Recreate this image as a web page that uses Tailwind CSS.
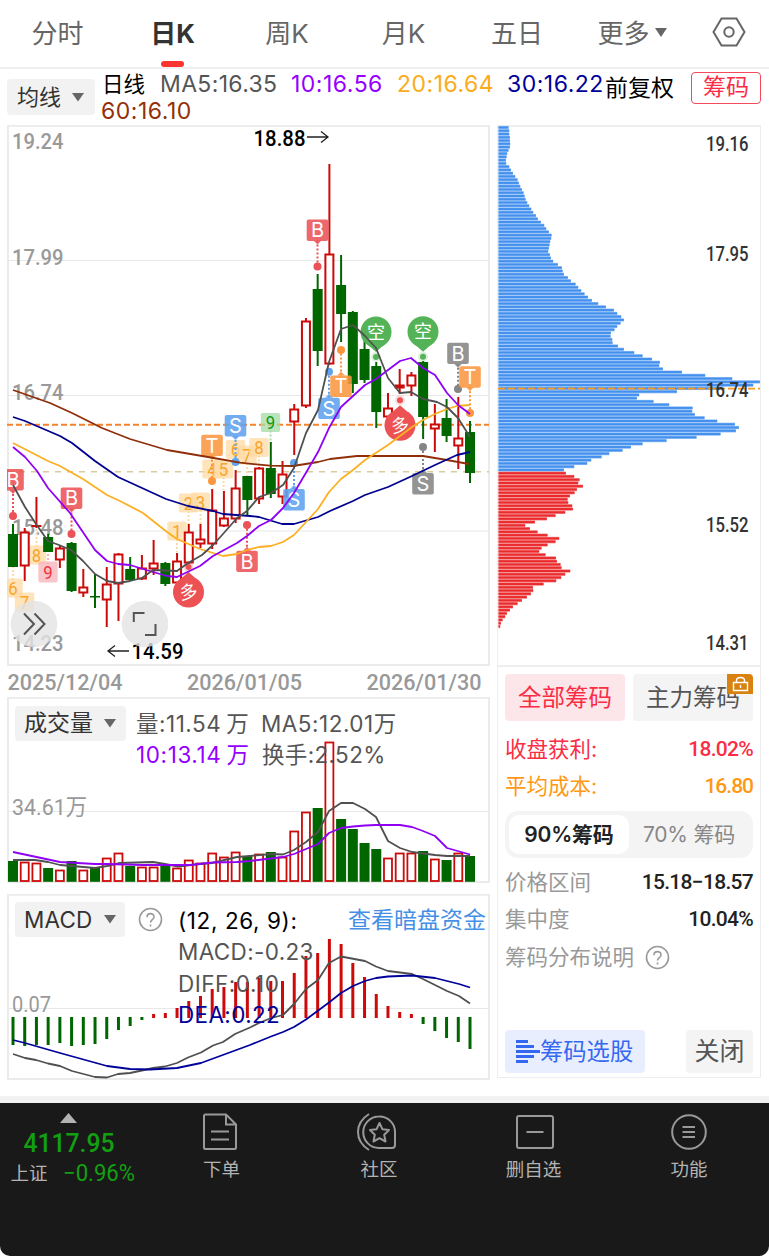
<!DOCTYPE html>
<html lang="zh-CN">
<head>
<meta charset="utf-8">
<title>日K</title>
<script src="https://cdn.jsdelivr.net/npm/@tailwindcss/browser@4"></script>
</head>
<body class="w-[769px] h-[1256px] overflow-hidden bg-white font-['Inter','Noto_Sans_CJK_SC',sans-serif] text-[#666] whitespace-nowrap">
<div class="flex flex-col h-[1256px]">
  <nav class="flex h-[69px] border-b-2 border-[#f0f0f0] text-[26px] leading-[67px] text-center shrink-0">
    <div class="w-[115px]">分时</div>
    <div class="w-[115px] flex flex-col items-center font-bold text-[#333]"><span class="h-[61px]">日K</span><span class="w-[23px] h-[6px] rounded-full bg-[#fb3430]"></span></div>
    <div class="w-[114px]">周K</div>
    <div class="w-[119px]">月K</div>
    <div class="w-[108px]">五日</div>
    <div class="w-[123px] flex items-center justify-center gap-[4px] h-[67px]">更多<svg width="14" height="9" class="-mt-[3px]"><path d="M1 0H13L7 9Z" fill="#666"/></svg></div>
    <div class="w-[69px] flex items-center justify-center h-[64px]"><svg width="34" height="30" viewBox="0 0 34 30" fill="none" stroke="#666" stroke-width="2"><path d="M9.500 1.500H24.500L32.500 15L24.500 28.500H9.500L1.500 15Z"/><circle cx="17" cy="15" r="4.700"/></svg></div>
  </nav>

  <div class="flex h-[56px] pl-[7px] shrink-0">
    <div class="mt-[10px] w-[88px] h-[36px] rounded bg-[#f2f2f2] text-[#333] text-[22px] leading-[35px] pl-[10px] flex items-center gap-[11px]">均线<svg width="13" height="9"><path d="M0 0H12L6 8.500Z" fill="#666"/></svg></div>
    <div class="w-[510px] pl-[6px] flex flex-wrap content-start text-[23px] leading-[27px] pt-[2px] tracking-[0.5px]">
      <div class="w-[59px] pl-px text-black text-[21.500px] tracking-normal">日线</div>
      <div class="w-[131px] text-[#555] tracking-[0.35px]">MA5:16.35</div>
      <div class="w-[106px] text-[#9500ff]">10:16.56</div>
      <div class="w-[110px] text-[#faac1a]">20:16.64</div>
      <div class="w-[97px] text-[#00009b]">30:16.22</div>
      <div class="w-[110px] text-[#933008]">60:16.10</div>
    </div>
    <div class="w-[86px] text-black text-[23px] leading-[38px]">前复权</div>
    <div class="mt-[3px] w-[70px] h-[32px] rounded-[4px] border border-[#f5495c] text-[#fa2d45] text-[23px] leading-[29px] text-center">筹码</div>
  </div>

  <main class="flex h-[971px] shrink-0 pl-[7px] gap-[7px]">
    <div class="w-[483px] flex flex-col">
      <section class="h-[541px] w-[483px] shrink-0">
        <svg id="k" width="483" height="541" viewBox="7 125 483 541"></svg>
      </section>
      <div class="h-[31px] shrink-0"><svg id="dates" width="483" height="31" viewBox="7 666 483 31"></svg></div>
      <section class="relative h-[186px] shrink-0 mb-[11px]">
        <svg id="vol" class="absolute inset-0" width="483" height="186" viewBox="7 697 483 186"></svg>
        <div class="relative flex pl-[8px] pt-[9px]">
          <div class="w-[111px] h-[35px] rounded bg-[#f2f2f2] text-[#333] text-[23px] pl-[9px] flex items-center gap-[11px]">成交量<svg width="13" height="9"><path d="M0 0H12L6 8.500Z" fill="#666"/></svg></div>
          <div class="pl-[10px] grid grid-cols-[125px_140px] text-[22.500px] leading-[31px] text-[#555] pt-[2px] tracking-[0.5px]">
            <span>量:11.54<span class="ml-[5px]">万</span></span><span>MA5:12.01万</span>
            <span class="text-[#9500ff] tracking-[0.6px]">10:13.14<span class="ml-[5px]">万</span></span><span class="pl-px tracking-[0.35px]">换手:2.52%</span>
          </div>
        </div>
      </section>
      <section class="relative h-[186px] shrink-0">
        <svg id="macd" class="absolute inset-0" width="483" height="186" viewBox="7 894 483 186"></svg>
        <div class="relative flex pl-[8px] pt-[8px]">
          <div class="w-[110px] h-[35px] rounded bg-[#f2f2f2] text-[#333] text-[22.500px] pl-[9px] flex items-center gap-[11px] tracking-[0.2px]">MACD<svg width="13" height="9"><path d="M0 0H12L6 8.500Z" fill="#666"/></svg></div>
          <svg class="ml-[13px] mt-[5px]" width="25" height="25"><circle cx="12.500" cy="12.500" r="11" fill="none" stroke="#999" stroke-width="1.600"/><path d="M9 10.200C9 5.500 16 5.500 16 10C16 12.500 12.500 12.600 12.500 15.500M12.500 17.500V19.500" fill="none" stroke="#999" stroke-width="1.600"/></svg>
          <div class="pl-[15px] text-[22.500px] leading-[31.300px] text-[#555] pt-[3px] tracking-[0.35px]">
            <div class="flex w-[308px] justify-between text-black"><span class="tracking-[0.6px]">(12, 26, 9):</span><span class="text-[#4590e6] text-[23px] tracking-normal">查看暗盘资金</span></div>
            <div>MACD:-0.23</div>
            <div class="tracking-[0.5px]">DIFF:0.10</div>
            <div class="text-[#00009b]">DEA:0.22</div>
          </div>
        </div>
      </section>
    </div>

    <aside class="w-[264px] h-[953px] border border-t-2 border-[#eee] flex flex-col">
      <svg id="chips" class="shrink-0 -mt-[2px] -ml-px" width="264" height="541" viewBox="497 125 264 541"></svg>
      <div class="flex flex-col flex-1 pl-[7px] pr-[7px] border-t-2 border-[#eee] pt-[7px] -mt-px">
        <div class="flex gap-[8px] text-[23.500px] leading-[48px] text-center">
          <div class="w-[120px] h-[47px] rounded bg-[#fde6e9] text-[#fa2d45]">全部筹码</div>
          <div class="relative w-[120px] h-[47px] rounded bg-[#f4f4f4] text-[#555]">主力筹码
            <svg class="absolute top-0 right-0" width="26" height="20"><path d="M0 0H22Q26 0 26 4V20H0Z" fill="#d9820f"/><path d="M6.500 8.500H20.500V16.500H6.500ZM9.500 8V6.500Q9.500 3.500 13.500 3.500T17.500 6.500V8M13.500 11V14" fill="none" stroke="#fff" stroke-width="1.400"/></svg>
          </div>
        </div>
        <div class="flex justify-between text-[#fa2d45] mt-[9px] h-[37px] leading-[39px] text-[21.500px]"><span>收盘获利:</span><span class="font-['Roboto'] font-medium text-[21px] leading-[38px] tracking-[-0.700px]">18.02%</span></div>
        <div class="flex justify-between text-[#ff9814] h-[37px] leading-[39px] text-[21.500px]"><span>平均成本:</span><span class="font-['Roboto'] font-medium text-[21px] leading-[38px] tracking-[-1px]">16.80</span></div>
        <div class="mt-[7px] h-[47px] rounded-[13px] bg-[#f4f4f4] p-[4px] flex text-[21px] leading-[40px] text-center shrink-0">
          <div class="w-[120px] rounded-[10px] bg-white text-[#222] font-semibold tracking-[-0.200px]">90%筹码</div>
          <div class="w-[120px] text-[#888] tracking-[-0.200px]">70% 筹码</div>
        </div>
        <div class="flex justify-between mt-[5px] h-[37px] leading-[39px] text-[21.500px] text-[#999]"><span>价格区间</span><span class="font-['Roboto'] font-medium text-[21px] text-[#222] tracking-[-0.700px]">15.18−18.57</span></div>
        <div class="flex justify-between h-[38px] leading-[39px] text-[21.500px] text-[#999]"><span>集中度</span><span class="font-['Roboto'] font-medium text-[21px] text-[#222] tracking-[-0.700px]">10.04%</span></div>
        <div class="flex items-center gap-[11px] h-[39px] text-[21.500px] text-[#999]">筹码分布说明<svg width="25" height="25"><circle cx="12.500" cy="12.500" r="11" fill="none" stroke="#999" stroke-width="1.600"/><path d="M9 10.200C9 5.500 16 5.500 16 10C16 12.500 12.500 12.600 12.500 15.500M12.500 17.500V19.500" fill="none" stroke="#999" stroke-width="1.600"/></svg></div>
        <div class="flex justify-between mt-auto mb-[4px] text-[23.300px] leading-[43px]">
          <div class="w-[140px] h-[43px] rounded bg-[#e9eeff] text-[#3568f0] flex items-center pl-[11px]"><svg width="24" height="23" stroke="#3568f0" stroke-width="2.800"><path d="M0 1.500H12M0 6.500H18M0 11.500H24M0 16.500H18M0 21.500H12"/></svg>筹码选股</div>
          <div class="w-[67px] h-[43px] rounded bg-[#f4f4f4] text-[#555] text-center text-[25px]">关闭</div>
        </div>
      </div>
    </aside>
  </main>

  <div class="flex-1 bg-[#f2f2f2] flex flex-col">
    <div class="h-[7px]"></div>
    <div class="flex-1 bg-white"><footer class="h-full bg-[#191919] rounded-b-[10px] flex text-[#b3b3b3] text-[18.500px] leading-[26px]">
      <div class="w-[145px] pt-[10px]">
        <svg class="ml-[60px]" width="17" height="10"><path d="M8.500 0L17 10H0Z" fill="#b3b3b3"/></svg>
        <svg id="idx" width="145" height="64" viewBox="0 1123 145 64"></svg>
      </div>
      <div class="w-[153px] flex flex-col items-center pt-[10px] text-center">
        <svg class="-ml-[4px]" width="36" height="38" fill="none" stroke="#999" stroke-width="2"><path d="M2 3Q2 1.500 3.500 1.500H24L34 11.500V34.500Q34 36 32.500 36H3.500Q2 36 2 34.500ZM24 1.500V11.500H34M9 18.500H27M9 26.500H27"/></svg>
        <span class="mt-[5px]">下单</span>
      </div>
      <div class="w-[163px] flex flex-col items-center pt-[10px]">
        <svg class="-ml-[5px]" width="40" height="38" fill="none" stroke="#999" stroke-width="2"><path d="M12 1Q1 8 1 19T12 37M22 3.500A15.500 15.500 0 1 0 22 35H35Q38 35 38 32V19A15.500 15.500 0 0 0 22 3.500Z"/><path d="M22.500 10L25.400 16.200L32 17L27.200 21.800L28.500 28.500L22.500 25.200L16.500 28.500L17.800 21.800L13 17L19.600 16.200Z" stroke-linejoin="round"/></svg>
        <span class="mt-[5px] -ml-px">社区</span>
      </div>
      <div class="w-[145px] flex flex-col items-center pt-[10px]">
        <svg class="ml-[3px]" width="40" height="38" fill="none" stroke="#999" stroke-width="2"><rect x="2" y="3" width="36" height="32" rx="2"/><path d="M11.500 19H28.500"/></svg>
        <span class="mt-[5px]">删自选</span>
      </div>
      <div class="w-[163px] flex flex-col items-center pt-[10px]">
        <svg class="ml-[2px]" width="40" height="38" fill="none" stroke="#999" stroke-width="2"><circle cx="20" cy="19" r="16.800"/><path d="M13.500 14H26M13.500 19H26M13.500 24H26"/></svg>
        <span class="mt-[5px] ml-[3px]">功能</span>
      </div>
    </footer></div>
  </div>
</div>
<script>
const NS='http://www.w3.org/2000/svg', $=id=>document.getElementById(id);
function el(p,n,a,t){const e=document.createElementNS(NS,n);for(const k in a)e.setAttribute(k,a[k]);if(t!==undefined)e.textContent=t;p.appendChild(e);return e}
const R='#cc0a0a',G='#006600',X=i=>13+i*11.718;
const line=(s,x1,y1,x2,y2,c,w,d)=>el(s,'line',{x1,y1,x2,y2,stroke:c,'stroke-width':w,...(d?{'stroke-dasharray':d}:{})});
const poly=(s,pts,c)=>el(s,'polyline',{points:pts,fill:'none',stroke:c,'stroke-width':1.8,'stroke-linejoin':'round'});
const num=(s,x,y,w,size,c,t,wt=500)=>el(s,'text',{x,y,fill:c,'font-family':'Roboto, "Noto Sans CJK SC", sans-serif','font-weight':wt,'font-size':size,textLength:w,lengthAdjust:'spacingAndGlyphs'},t);
const frame=(s,x,y,w,h)=>el(s,'rect',{x:x+1,y:y+.8,width:w-2,height:h-1.800,fill:'none',stroke:'#ebebeb','stroke-width':2});

// Price chart: [up, high, bodyTop, bodyBottom, low]
const K=[[0,524,534,567,567],[1,528,532,566,581],[1,497,526,527,528],[0,534,537,552,552],[1,546,548,560,568],[0,542,543,591,592],[1,569,587,593,597],[0,574,596,597.5,608],[1,567,584,600,627],[1,553,554,584,621],[0,557,569,580,581],[1,555,568,579,580],[1,540,563,569,575],[0,562,563,584,586],[1,553,561,583,585],[1,524,532,563,564],[1,524,539,544,548],[1,489,510,544,549],[1,491,518,526,527],[1,470,488,519,523],[0,476,476,500,516],[1,467,468,499,504],[0,442,468,494,498],[1,461,474,497,504],[1,404,409,422,455],[1,318,321,406,408],[0,274,289,351,366],[1,164,254,364,365],[0,255,285,314,342],[0,311,312,384,393],[0,332,349,380,383],[0,362,366,412,428],[1,393,408,417,428],[1,369,385,388,394],[1,372,375,386,396],[0,361,362,417,439],[1,404,424,429,452],[0,399,418,436,442],[1,397,438,446,469],[0,421,432,473,483]];
const k=$('k');
frame(k,7,125,483,541);
[260.5,395.5,531].forEach(y=>line(k,8,y,489,y,'#e8e8e8',1.2));
[[148.5,'19.24'],[264.5,'17.99'],[399.5,'16.74'],[534.5,'15.48'],[650.5,'14.23']].forEach(a=>num(k,12,a[0],51.5,22.5,'#999',a[1]));
line(k,7,424.7,489,424.7,'#f5822d',1.9,'6 3');
line(k,7,471.7,489,471.7,'#d8cc9f',1.4,'6 6');
function num9(x,y,t,f='#ffd9a3',c='#f7a52b',h=19,tail=0){
  if(tail)line(k,x,y,x,tail,f,2,'2 2');
  el(k,'rect',{x:x-9.7,y:y-h/2,width:19.4,height:h,rx:2,fill:f,'fill-opacity':.75});
  num(k,x-4.7,y+6.5,9.4,18,c,t,400)}
num9(36.5,555,'8',undefined,undefined,19,529);num9(48,572,'9','#f6b3b8','#f0323c',21,553);
num9(13,588,'6',undefined,undefined,19,567);num9(24.5,602,'7');
num9(177,531,'1',undefined,undefined,19,552);num9(188.5,503,'2',undefined,undefined,19,524);num9(200.5,502,'3',undefined,undefined,19,524);
num9(212,469,'4');num9(223.5,469,'5',undefined,undefined,19,490);num9(235.5,449.5,'6');num9(247,455,'7',undefined,undefined,19,476);num9(259,447.5,'8',undefined,undefined,19,467);
num9(270.5,422.5,'9','#a6dba6','#0f9a12',19,443);
K.forEach((d,i)=>{const x=X(i),c=d[0]?R:G;
  if(d[0]){line(k,x,d[1],x,d[2],c,2);line(k,x,d[3],x,d[4],c,2);
    d[3]-d[2]<2?line(k,x-5,d[2],x+5,d[2],c,2):el(k,'rect',{x:x-4,y:d[2]+.5,width:8,height:d[3]-d[2]-1,fill:'#fff',stroke:c,'stroke-width':2})}
  else{line(k,x,d[1],x,d[4],c,2);el(k,'rect',{x:x-5,y:d[2],width:10,height:d[3]-d[2],fill:c})}});
function tag(x,top,t,c,dot){const below=dot>top;
  line(k,x,below?top+21:top,x,dot,c,2,'2 2');
  el(k,'circle',{cx:x,cy:dot,r:4,fill:c});
  el(k,'path',{d:below?`M${x-4} ${top+21}h8l-4 4z`:`M${x-4} ${top}h8l-4 -4z`,fill:c,'fill-opacity':.85});
  el(k,'rect',{x:x-10.8,y:top,width:21.6,height:21.4,rx:2,fill:c,'fill-opacity':.88});
  el(k,'text',{x,y:top+17.8,fill:'#fff','text-anchor':'middle','font-family':'Inter','font-size':20},t)}
const tr='#ea5257',tb='#5ea2f0',to='#fb963f',tg='#858585';
tag(13,469,'B',tr,516);tag(71.5,487.5,'B',tr,534);tag(247,550.7,'B',tr,525);tag(317.5,219.5,'B',tr,266.5);
tag(235.5,415,'S',tb,462);tag(212,434.7,'T',to,481);tag(329,397.7,'S',tb,371.7);tag(341,375.5,'T',to,350);
tag(294,489,'S',tb,463);tag(423,473,'S',tg,447);tag(458,342.7,'B',tg,389);tag(470,366.3,'T',to,413);
function pin(x,y,t,c,dir,rot){
  el(k,'circle',{cx:x,cy:y+dir*25,r:5,fill:c,'fill-opacity':.2});
  el(k,'circle',{cx:x,cy:y+dir*25,r:3,fill:c});
  el(k,'path',{d:`M${x-9} ${y+dir*12}L${x} ${y+dir*20}L${x+9} ${y+dir*12}Z`,fill:c});
  el(k,'circle',{cx:x,cy:y,r:15.5,fill:c});
  el(k,'text',{x,y:y+6.5,fill:'#fff','text-anchor':'middle','font-family':'"Noto Sans CJK SC"','font-size':18,transform:`rotate(${rot} ${x} ${y})`},t)}
pin(376,332,'空','#55b357',1,0);pin(423,331.7,'空','#55b357',1,0);
pin(400,425.3,'多','#ec5153',-1,-8);pin(188.5,592,'多','#ec5153',-1,-8);
poly(k,'13,390 50,403 72,413 102,428 130,439 167,450 208,457 240,462.7 270,465.7 293,466 318,462 330,459 357,456 400,456 423,456 447,460 469,464','#8f2e08');
poly(k,'13,417 25,421 60,436 72,443 95,461 118,477 142,488 166,499 188,506 213,511 223,514 250,516 259,517 282,524 294,524 318,517 330,511 353,501 365,495 388,487 412,476 435,465 457,455 470,452','#00008f');
poly(k,'13,443 48,461 60,466 83,479 107,495 120,501 143,513 167,532 177,539 200,549 223,556 237,554 247,550 259,547 271,546 283,542 294,535 318,509 329,492 341,479 353,470 365,460 388,445 412,427 423,420 435,414 447,409 457,406 470,405','#fbb022');
poly(k,'13,447 25,457 37,471 48,488 70,513 95,550 107,561 118,564 130,565 153,572 167,576 177,577 200,566 213,556 237,543 247,536 259,526 271,520 283,508 294,493 307,471 318,452 329,428 341,407 365,385 376,379 388,370 400,361 411,358 423,368 435,375 447,393 458,405 470,414','#9000f5');
poly(k,'13,485 25,507 36,524 48,541 59,545 71,550 83,561 95,574 107,581 118,583 130,581 142,578 153,570 177,571 188,563 202,555 213,545 223,534 237,518 247,511 259,497 271,493 283,485 294,468 306,433 318,410 329,362 341,329 353,325 365,336 376,348 388,378 400,393 411,392 423,399 437,402 447,407 458,418 470,437','#505050');
num(k,253.5,145.5,52,22,'#000','18.88');
el(k,'path',{d:'M307 137H328M321 131.5L328 137L321 142.5M129 651H108M115 645.5L108 651L115 656.5',fill:'none',stroke:'#222','stroke-width':1.3});
num(k,131.5,659,52,22,'#000','14.59');
[[34,624],[145,624]].forEach(c=>el(k,'circle',{cx:c[0],cy:c[1],r:23.3,fill:'#e3e3e3','fill-opacity':.8}));
el(k,'path',{d:'M24 613.5L34 624L24 634.5M34.5 613.5L44.5 624L34.5 634.5M133.8 622V613H144.5M155.5 624V635H145',fill:'none',stroke:'#555','stroke-width':2});
[[7.5,'2025/12/04'],[187,'2026/01/05'],[366.5,'2026/01/30']].forEach(a=>num($('dates'),a[0],689.5,115,22,'#999',a[1]));

// Volume
const v=$('vol');frame(v,7,697,483,186);line(v,8,811.5,489,811.5,'#e8e8e8',1.2);
num(v,12,815,75,22.5,'#999','34.61万',400);
[861,862,863,868,870,861,870,868,858,853,866,867,867,866,868,860,863,853,857,852,856,854,852,857,831,812,808,742,819,829,843,849,858,853,853,851,859,860,853,856].forEach((y,i)=>K[i][0]?el(v,'rect',{x:X(i)-4,y:y+.5,width:8,height:880.5-y,fill:'#fff',stroke:R,'stroke-width':1.8}):el(v,'rect',{x:X(i)-5,y,width:10,height:881.8-y,fill:G}));
poly(v,'13,860 35,860 48,862 60,865 72,866 95,868 107,866 120,863 153,862 165,864 178,866.5 200,864 212,863 237,857 250,856 271,854 283,854.5 294,850 306,842 318,832 329,811 341,803 353,803 365,809 376,817 388,841 400,848 412,852 435,855 447,856 470,856','#505050');
poly(v,'13,852 60,862 95,864 107,864 142,865 190,865 213,862.5 237,862 250,861 283,857 294,854 318,844 329,833 341,828 353,826.5 365,825.5 376,825 400,825 412,827 423,831 435,836 447,848 470,854.5','#9000f5');

// MACD
const m=$('macd');frame(m,7,894,483,186);line(m,8,1008.5,489,1008.5,'#e8e8e8',1.2);
num(m,12,1011.5,39,22.5,'#999','0.07',400);
[1045,1046,1045,1045,1043,1046,1045,1044,1039,1030,1026,1020,1014,1013,1008,1001,996,989,987,982,982,978,981,981,973,956,953,939,944,963,977,994,1006,1012,1014,1024,1031,1038,1042,1049].forEach((y,i)=>line(m,X(i),y>1017?1017:1018,X(i),y,y>1017?G:R,3));
poly(m,'13,1054 25,1058 36,1060 48,1063.5 60,1066 72,1071 95,1077 107,1077.5 118,1074 130,1073 142,1070.5 153,1068 165,1066.5 177,1063 188,1057.5 201,1052.5 213,1045.5 223,1042 235,1034 250,1027.5 259,1023 271,1018 283,1015 294,1004 306,989 318,980 329,963 341,956.5 365,961 376,966.5 388,971 412,974 423,979 447,991 459,996 470,1003.5','#505050');
poly(m,'13,1040 25,1043 60,1053 107,1066 130,1069 150,1069.5 177,1068 201,1063 250,1045 271,1036.5 283,1032 294,1027 306,1019.5 329,1002.5 341,993 353,986 365,981 376,978 388,976.5 412,975.5 435,978 459,984 470,987.5','#00009b');

// Chip distribution, bar ends in thirds of a pixel
const W=[55,57,57,59,59,60,59,55,51,49,47,48,57,62,68,75,82,86,90,95,100,103,106,111,117,123,129,137,143,152,162,168,176,184,183,180,178,176,174,179,182,189,203,215,217,221,233,242,256,264,273,283,293,305,324,347,371,381,393,401,391,381,373,362,361,366,367,383,401,432,457,485,509,507,518,575,645,726,809,789,700,560,447,440,490,537,607,606,614,643,681,734,746,737,691,619,529,457,422,397,357,334,303,291,252,221,
227,252,268,264,278,260,253,239,232,234,246,248,225,196,170,134,105,119,142,172,207,196,172,154,147,166,197,200,211,214,240,225,213,198,160,128,129,122,110,95,82,68,59,50,45,37,32,30];
const c=$('chips'),B='#4390ee',D='#ea2a2c';
W.forEach((w,i)=>{const f=i<106?B:D,y=127.5+i*3.261,L=(w-25)/3;
  el(c,'rect',{x:498.5,y:y-1.6,width:L,height:3.3,fill:f,'fill-opacity':.55});
  el(c,'rect',{x:498.5,y:y-1,width:L,height:2,fill:f})});
line(c,498,388.7,760,388.7,'#f79a1e',1.8,'7 3');
[[151,'19.16'],[261,'17.95'],[396.5,'16.74'],[531.5,'15.52'],[649.5,'14.31']].forEach(a=>num(c,706,a[0],42.5,19.5,'#333',a[1]));

// Index quote
const q=$('idx');
num(q,23.5,1151.5,91,26,'#12a012','4117.95',500);
el(q,'text',{x:10.5,y:1180,fill:'#b3b3b3','font-family':'"Noto Sans CJK SC"','font-size':18.5},'上证');
num(q,63,1181,72,23.5,'#12a012','−0.96%',400);
</script>
</body>
</html>
